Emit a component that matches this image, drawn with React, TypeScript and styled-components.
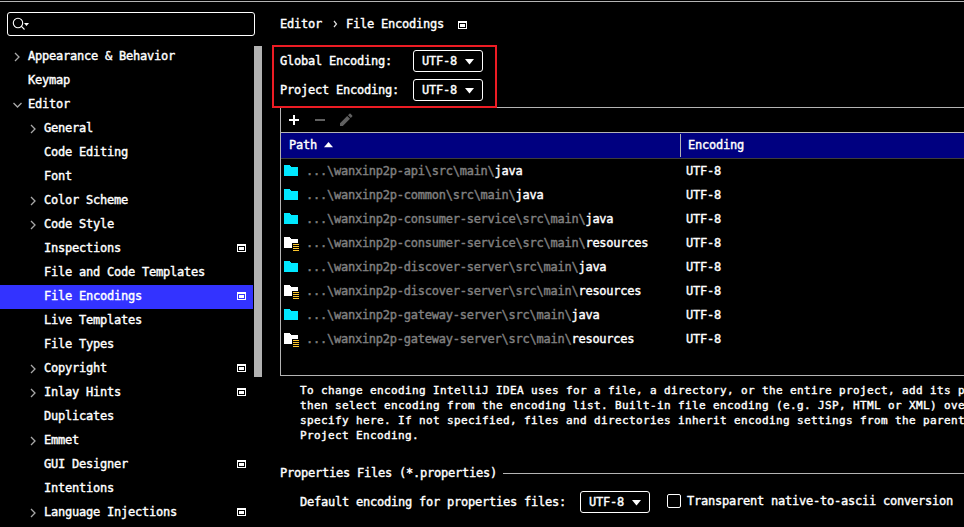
import React from "react";
import styled, { createGlobalStyle } from "styled-components";

const GlobalStyle = createGlobalStyle`
  * { box-sizing: border-box; }
  body { margin: 0; background: #000; overflow: hidden; }
`;

const Window = styled.div`
  display: flex;
  width: 964px;
  height: 527px;
  padding-top: 1px;
  overflow: hidden;
  background: linear-gradient(#b4b4b4, #b4b4b4) 0 1px / 100% 1px no-repeat #000;
  color: #fff;
  font: 12px/24px "DejaVu Sans Mono", monospace;
  letter-spacing: -0.2246px;
  white-space: pre;
  -webkit-text-stroke: 0.4px currentColor;
  svg { display: block; flex: none; }
`;

const Sidebar = styled.aside`
  flex: none;
  width: 272px;
  padding-top: 11px;
`;

const SearchBox = styled.div`
  display: flex;
  width: 248px;
  height: 24px;
  margin-left: 7px;
  padding: 4px 0 0 4px;
  border: 1px solid #fff;
  border-radius: 3px;
`;

const TreeArea = styled.div`
  display: flex;
  gap: 1px;
  margin-top: 9px;
`;

const Tree = styled.div`
  width: 253px;
`;

const TreeRow = styled.div<{ $level: number; $selected?: boolean }>`
  display: flex;
  height: 24px;
  padding-left: ${(p) => 12 + p.$level * 16}px;
  padding-right: 7px;
  background: ${(p) => (p.$selected ? "#3333ff" : "transparent")};
`;

const ArrowSlot = styled.span`
  width: 16px;
  padding-top: 6px;
`;

const TreeLabel = styled.span`
  flex: 1;
  line-height: 22px;
`;

const MarkSlot = styled.span`
  padding-top: 7px;
`;

const ScrollThumb = styled.div`
  width: 8px;
  height: 331px;
  margin-top: 1px;
  background: #b2b2b2;
`;

const Main = styled.main`
  flex: none;
  width: 692px;
  display: flex;
  flex-direction: column;
`;

const Breadcrumb = styled.div`
  display: flex;
  height: 44px;
  padding: 11px 0 0 8px;
  line-height: 24px;
`;

const Separator = styled.span`
  width: 24px;
  padding: 8px 0 0 11px;
`;

const CrumbMark = styled.span`
  padding: 9px 0 0 14px;
`;

const EncodingGroup = styled.section`
  position: relative;
  z-index: 1;
  width: 225px;
  height: 63px;
  margin-bottom: -1px;
  padding: 3px 0 0 6px;
  border: 2px solid #ed1c24;
`;

const Field = styled.div`
  display: flex;
  height: 29px;
  line-height: 22px;
`;

const FieldLabel = styled.label`
  width: 133px;
`;

const Combo = styled.button`
  display: flex;
  justify-content: space-between;
  width: 70px;
  height: 22px;
  padding: 0 8px;
  border: 1px solid #fff;
  border-radius: 3px;
  background: #000;
  color: inherit;
  font: inherit;
  line-height: 20px;
  letter-spacing: inherit;
  svg { margin-top: 8px; }
`;

const TablePanel = styled.section`
  flex: none;
  height: 269px;
  margin-left: 8px;
  border: 1px solid #b4b4b4;
  border-right: 0;
`;

const Toolbar = styled.div`
  display: flex;
  gap: 10px;
  height: 25px;
  padding: 4px 0 0 5px;
  border-bottom: 1px solid #b4b4b4;
`;

const TableHeader = styled.div`
  display: flex;
  height: 26px;
  padding-top: 1px;
  border-bottom: 1px solid #3c3c3c;
  background: #000080;
  line-height: 22px;
`;

const PathHeader = styled.div`
  display: flex;
  width: 400px;
  height: 23px;
  padding-left: 8px;
  gap: 7px;
  border-right: 1px solid #b4b4b4;
  svg { margin-top: 8px; }
`;

const EncodingHeader = styled.div`
  padding-left: 7px;
`;

const TableRow = styled.div`
  display: flex;
  height: 24px;
  padding-left: 3px;
  line-height: 24px;
`;

const FolderSlot = styled.span`
  width: 22px;
  padding-top: 6px;
`;

const PathCell = styled.span`
  width: 380px;
  color: #808080;
  letter-spacing: -0.24px;
`;

const Leaf = styled.b`
  color: #fff;
  font-weight: normal;
`;

const Hint = styled.p`
  margin: 7px 0 0 28px;
  font-size: 11px;
  line-height: 15px;
  letter-spacing: 0.3774px;
`;

const SectionTitle = styled.h2`
  display: flex;
  align-items: center;
  gap: 6px;
  height: 22px;
  margin: 18px 0 0 8px;
  font: inherit;
  line-height: 22px;
  &::after {
    content: "";
    flex: 1;
    height: 1px;
    margin-top: 2px;
    background: #b4b4b4;
  }
`;

const TitleText = styled.span`
  padding-top: 2px;
`;

const PropertiesRow = styled.div`
  display: flex;
  height: 22px;
  margin: 8px 0 0 28px;
  line-height: 22px;
`;

const PropertiesLabel = styled.label`
  width: 280px;
`;

const CheckBox = styled.span`
  width: 14px;
  height: 14px;
  margin: 3px 6px 0 17px;
  border: 1px solid #fff;
  border-radius: 2px;
`;

const CheckLabel = styled.span`
  line-height: 20px;
`;

const Arrow = ({ open }: { open?: boolean }) => (
  <svg width="11" height="12" fill="none" stroke="#a8a8a8" strokeWidth="1.3">
    <path d={open ? "M1.5 4 L5.5 8 L9.5 4" : "M3 2 L7 6 L3 10"} />
  </svg>
);

const ProjectMark = () => (
  <svg width="9" height="8" shapeRendering="crispEdges">
    <path fill="#fff" fillRule="evenodd" d="M0 0H9V8H0Z M1 2V7H8V2Z M2 3H7V6H2Z" />
  </svg>
);

const Triangle = ({ up }: { up?: boolean }) => (
  <svg width="9" height="6" fill="#fff">
    <path d={up ? "M0 5.2 L4.5 0 L9 5.2Z" : "M0 0H9L4.5 5.4Z"} />
  </svg>
);

const Folder = ({ resources }: { resources?: boolean }) => (
  <svg width="16" height="15" shapeRendering="crispEdges">
    <path fill={resources ? "#fff" : "#00e8ff"} d="M0 0H5L7 2H14V11H0Z" />
    {resources && (
      <>
        <path fill="#000" d="M8 6H16V15H8Z" />
        <path fill="#fbc52d" d="M9 7H15V8H9ZM9 9H15V10H9ZM9 11H15V12H9ZM9 13H15V14H9Z" />
      </>
    )}
  </svg>
);

const SearchIcon = () => (
  <svg width="18" height="15" fill="none" stroke="#fff" strokeWidth="1.1">
    <circle cx="6" cy="6" r="4.7" />
    <path d="M9.2 9.2 L12.5 12.5" />
    <path fill="#fff" stroke="none" d="M12 6H17L14.5 9Z" />
  </svg>
);

type Item = { text: string; level: number; arrow?: "open" | "closed"; mark?: boolean; selected?: boolean };

const items: Item[] = [
  { text: "Appearance & Behavior", level: 0, arrow: "closed" },
  { text: "Keymap", level: 0 },
  { text: "Editor", level: 0, arrow: "open" },
  { text: "General", level: 1, arrow: "closed" },
  { text: "Code Editing", level: 1 },
  { text: "Font", level: 1 },
  { text: "Color Scheme", level: 1, arrow: "closed" },
  { text: "Code Style", level: 1, arrow: "closed" },
  { text: "Inspections", level: 1, mark: true },
  { text: "File and Code Templates", level: 1 },
  { text: "File Encodings", level: 1, mark: true, selected: true },
  { text: "Live Templates", level: 1 },
  { text: "File Types", level: 1 },
  { text: "Copyright", level: 1, arrow: "closed", mark: true },
  { text: "Inlay Hints", level: 1, arrow: "closed", mark: true },
  { text: "Duplicates", level: 1 },
  { text: "Emmet", level: 1, arrow: "closed" },
  { text: "GUI Designer", level: 1, mark: true },
  { text: "Intentions", level: 1 },
  { text: "Language Injections", level: 1, arrow: "closed", mark: true },
];

const paths: [string, string][] = [
  ["api", "java"],
  ["common", "java"],
  ["consumer-service", "java"],
  ["consumer-service", "resources"],
  ["discover-server", "java"],
  ["discover-server", "resources"],
  ["gateway-server", "java"],
  ["gateway-server", "resources"],
];

const hint = [
  "To change encoding IntelliJ IDEA uses for a file, a directory, or the entire project, add its p",
  "then select encoding from the encoding list. Built-in file encoding (e.g. JSP, HTML or XML) ove",
  "specify here. If not specified, files and directories inherit encoding settings from the parent",
  "Project Encoding.",
].join("\n");

const EncodingCombo = () => (
  <Combo>
    UTF-8
    <Triangle />
  </Combo>
);

export default function App() {
  return (
    <>
      <GlobalStyle />
      <Window>
        <Sidebar>
          <SearchBox>
            <SearchIcon />
          </SearchBox>
          <TreeArea>
            <Tree>
              {items.map((item) => (
                <TreeRow key={item.text} $level={item.level} $selected={item.selected}>
                  <ArrowSlot>{item.arrow && <Arrow open={item.arrow === "open"} />}</ArrowSlot>
                  <TreeLabel>{item.text}</TreeLabel>
                  {item.mark && (
                    <MarkSlot>
                      <ProjectMark />
                    </MarkSlot>
                  )}
                </TreeRow>
              ))}
            </Tree>
            <ScrollThumb />
          </TreeArea>
        </Sidebar>
        <Main>
          <Breadcrumb>
            Editor
            <Separator>
              <svg width="5" height="8" fill="none" stroke="#ddd" strokeWidth="1.2">
                <path d="M1 1 L3.5 4 L1 7" />
              </svg>
            </Separator>
            File Encodings
            <CrumbMark>
              <ProjectMark />
            </CrumbMark>
          </Breadcrumb>
          <EncodingGroup>
            {["Global Encoding:", "Project Encoding:"].map((label) => (
              <Field key={label}>
                <FieldLabel>{label}</FieldLabel>
                <EncodingCombo />
              </Field>
            ))}
          </EncodingGroup>
          <TablePanel>
            <Toolbar>
              <svg width="16" height="16" shapeRendering="crispEdges">
                <path fill="#fff" d="M7 3H9V7H13V9H9V13H7V9H3V7H7Z" />
              </svg>
              <svg width="16" height="16" shapeRendering="crispEdges">
                <path fill="#606060" d="M3 7H13V9H3Z" />
              </svg>
              <svg width="16" height="16" fill="#606060">
                <path d="M2 11.2L9.2 4L12 6.8L4.8 14H2ZM10 3.2L11.4 1.8Q12 1.2 12.6 1.8L14.2 3.4Q14.8 4 14.2 4.6L12.8 6Z" />
              </svg>
            </Toolbar>
            <TableHeader>
              <PathHeader>
                Path
                <Triangle up />
              </PathHeader>
              <EncodingHeader>Encoding</EncodingHeader>
            </TableHeader>
            {paths.map(([module, leaf]) => (
              <TableRow key={module + leaf}>
                <FolderSlot>
                  <Folder resources={leaf === "resources"} />
                </FolderSlot>
                <PathCell>
                  {"...\\wanxinp2p-" + module + "\\src\\main\\"}
                  <Leaf>{leaf}</Leaf>
                </PathCell>
                <span>UTF-8</span>
              </TableRow>
            ))}
          </TablePanel>
          <Hint>{hint}</Hint>
          <SectionTitle>
            <TitleText>Properties Files (*.properties)</TitleText>
          </SectionTitle>
          <PropertiesRow>
            <PropertiesLabel>Default encoding for properties files:</PropertiesLabel>
            <EncodingCombo />
            <CheckBox />
            <CheckLabel>Transparent native-to-ascii conversion</CheckLabel>
          </PropertiesRow>
        </Main>
      </Window>
    </>
  );
}
